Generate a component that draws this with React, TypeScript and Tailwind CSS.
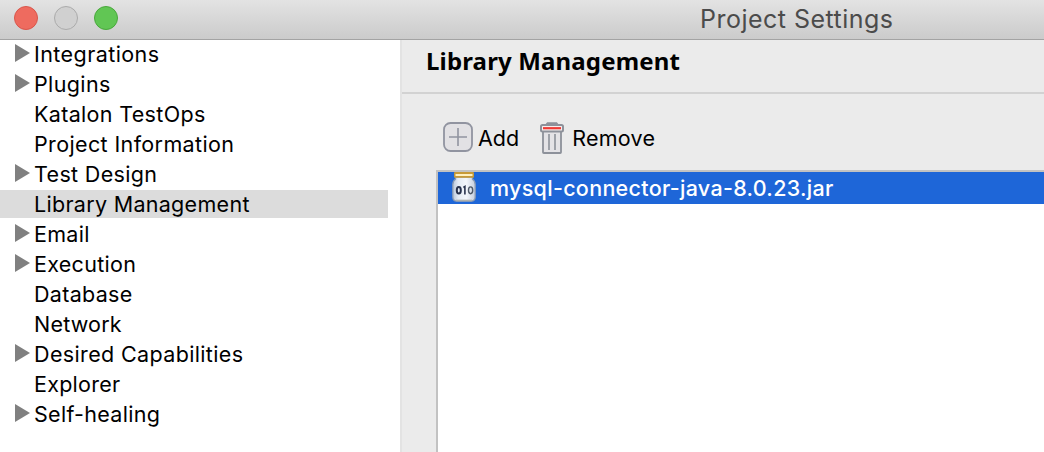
import React from 'react';

type Item = { label: string; expandable?: boolean; selected?: boolean; tracking: string };

const items: Item[] = [
  { label: 'Integrations', expandable: true, tracking: 'tracking-[0.43px]' },
  { label: 'Plugins', expandable: true, tracking: 'tracking-[0.37px]' },
  { label: 'Katalon TestOps', tracking: 'tracking-[0.33px]' },
  { label: 'Project Information', tracking: 'tracking-[0.37px]' },
  { label: 'Test Design', expandable: true, tracking: 'tracking-[0.33px]' },
  { label: 'Library Management', selected: true, tracking: 'tracking-[0.3px]' },
  { label: 'Email', expandable: true, tracking: 'tracking-[0.3px]' },
  { label: 'Execution', expandable: true, tracking: 'tracking-[0.3px]' },
  { label: 'Database', tracking: 'tracking-[0.3px]' },
  { label: 'Network', tracking: 'tracking-[0.2px]' },
  { label: 'Desired Capabilities', expandable: true, tracking: 'tracking-[0.36px]' },
  { label: 'Explorer', tracking: 'tracking-[0.25px]' },
  { label: 'Self-healing', expandable: true, tracking: 'tracking-[0.3px]' },
];

function TreeItem({ label, expandable, selected, tracking }: Item) {
  return (
    <li className={`flex h-[30px] w-[388px] items-start pl-[15px] ${selected ? 'bg-[linear-gradient(#dcdcdc,#dcdcdc)] bg-[length:100%_28px] bg-no-repeat' : ''}`}>
      <span className="w-[19px] shrink-0 pt-[4px]">
        {expandable && (
          <svg width="15" height="18" viewBox="0 0 15 18" className="block">
            <path d="M0 0 15 9 0 18Z" fill="#808080" />
          </svg>
        )}
      </span>
      <span className={`whitespace-nowrap leading-[28px] ${tracking}`}>{label}</span>
    </li>
  );
}

function AddIcon() {
  return (
    <svg width="30" height="30" viewBox="0 0 30 30" fill="none" stroke="#9194a0">
      <rect x="1" y="1" width="28" height="28" rx="6.5" strokeWidth="1.8" fill="#e2e1e4" />
      <path d="M15 6v18M6 15h18" strokeWidth="1.6" />
    </svg>
  );
}

function TrashIcon() {
  return (
    <svg width="24" height="33" viewBox="0 0 24 33" fill="none" stroke="#8d919a">
      <path d="M6 3 7.500 1h9L18 3Z" strokeWidth="1.6" fill="#8d919a" />
      <path d="M3 9v21.200q0 .8.8.8h16.400q.8 0 .8-.8V9" strokeWidth="1.8" fill="#e4e3e6" />
      <rect x="1" y="3" width="22" height="6.500" rx="1.500" strokeWidth="2" fill="#f6eeee" />
      <path d="M3 6.200h18" stroke="#f03a35" strokeWidth="2.200" />
      <path d="M9 12v16M15 12v16" strokeWidth="1.600" />
    </svg>
  );
}

function JarIcon() {
  return (
    <svg width="24" height="31" viewBox="0 0 24 31">
      <defs>
        <linearGradient id="glass" x1="0" x2="1" y1="0" y2="0">
          <stop offset="0" stopColor="#b9c7da" />
          <stop offset=".25" stopColor="#e4ebf4" />
          <stop offset=".6" stopColor="#f3f6fb" />
          <stop offset="1" stopColor="#c6cedd" />
        </linearGradient>
      </defs>
      <path d="M3.500 5h17v2.200q2.700 1.800 2.700 5.300V25q0 4-4 4.200H4.800q-4-.2-4-4.200V12.500q0-3.500 2.700-5.300Z" fill="url(#glass)" stroke="#8c9bb2" strokeWidth="1.300" />
      <path d="M4 28.400h16" stroke="#aeb1ae" strokeWidth="1.500" />
      <rect x="2" y="0" width="20" height="5.800" rx="1" fill="#c79a38" />
      <rect x="3.500" y="2" width="17" height="2" fill="#fff0c0" />
      <g fill="none" stroke="#28324d">
        <ellipse cx="6.800" cy="18.300" rx="2" ry="3.300" strokeWidth="2" />
        <path d="M11.400 15.500 12.900 14.500V22.400" strokeWidth="1.600" />
        <ellipse cx="18.600" cy="18.300" rx="2.100" ry="3.400" stroke="#4f5968" strokeWidth="1.400" />
      </g>
    </svg>
  );
}

export default function App() {
  return (
    <div className="flex h-[452px] w-[1044px] flex-col overflow-hidden bg-white font-['Inter',sans-serif] text-[21.500px] text-black">
      <header className="flex h-[40px] shrink-0 items-start border-b border-[#a3a3a3] bg-linear-to-b from-[#e3e3e3] to-[#cbcbcb]">
        <div className="flex gap-[16px] pt-[6px] pl-[14px]">
          <span className="size-[24px] rounded-full border border-[#d9564b] bg-[#ee6b5f]" />
          <span className="size-[24px] rounded-full border border-[#ababab] bg-[#d0d0d0]" />
          <span className="size-[24px] rounded-full border border-[#49a83c] bg-[#61c654]" />
        </div>
        <h1 className="ml-[582px] whitespace-nowrap text-[25px] leading-[38px] tracking-[0.48px] text-[#4b4b4b]">Project Settings</h1>
      </header>
      <div className="flex min-h-0 flex-1">
        <nav className="w-[400px] shrink-0">
          <ul>
            {items.map((item) => (
              <TreeItem key={item.label} {...item} />
            ))}
          </ul>
        </nav>
        <main className="flex min-w-0 flex-1 flex-col border-l-2 border-[#e3e3e3] bg-[#ebebeb]">
          <h2 className="h-[54px] shrink-0 border-b-2 border-[#d2d2d2] pl-[24px] font-['Noto_Sans','Open_Sans',sans-serif] text-[24px] font-bold leading-[41px] tracking-[0.15px] whitespace-nowrap">
            Library Management
          </h2>
          <div className="flex h-[76px] shrink-0 pl-[41px]">
            <button className="flex items-start pt-[28px]">
              <AddIcon />
              <span className="ml-[5px] leading-[32px]">Add</span>
            </button>
            <button className="ml-[21px] flex items-start pt-[28px]">
              <TrashIcon />
              <span className="ml-[8px] leading-[32px] tracking-[0.25px]">Remove</span>
            </button>
          </div>
          <div className="ml-[34px] flex-1 border-t-2 border-l-2 border-[#c2c2c2] bg-white">
            <div className="flex h-[32px] items-start bg-[#1e66d8] pl-[14px] text-white">
              <JarIcon />
              <span className="ml-[14px] whitespace-nowrap font-medium leading-[32px] tracking-[0.3px]">mysql-connector-java-8.0.23.jar</span>
            </div>
          </div>
        </main>
      </div>
    </div>
  );
}
